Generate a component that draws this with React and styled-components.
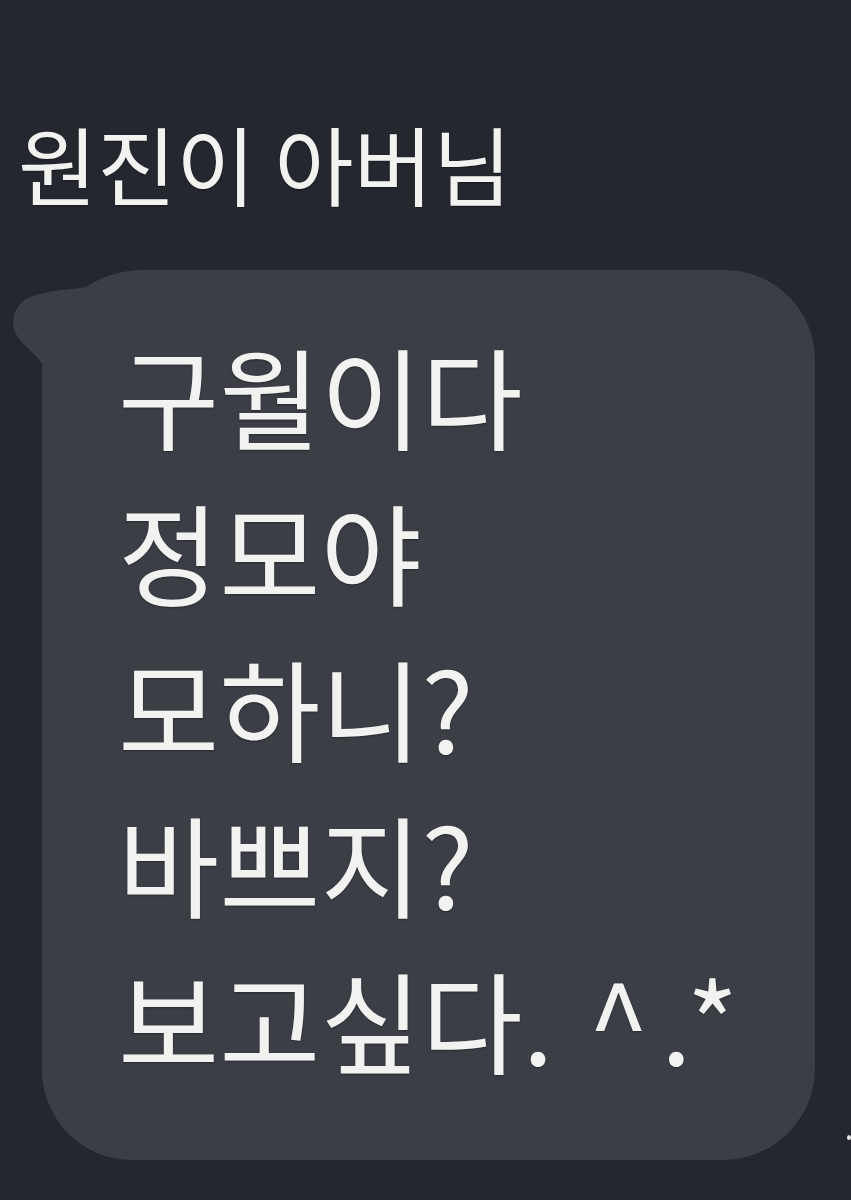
import React from "react";
import styled, { createGlobalStyle } from "styled-components";

const Global = createGlobalStyle`
  html, body { margin: 0; padding: 0; background: #24272e; }
  body { font-family: "Noto Sans CJK KR", "Noto Sans", sans-serif; }
`;

const Page = styled.div`
  position: relative;
  width: 851px;
  height: 1200px;
  overflow: hidden;
  background: #24272e;
  padding: 108px 36px 0 42px;
  box-sizing: border-box;
  display: flex;
  flex-direction: column;
  gap: 52px;
`;

const Name = styled.div`
  margin-left: -24px;
  color: #f2f2f0;
  font-size: 86px;
  line-height: 110px;
  font-weight: 400;
  text-shadow: 0 1px 2px rgba(0, 0, 0, 0.35);
`;

const Bubble = styled.div`
  position: relative;
  width: 773px;
  height: 890px;
  box-sizing: border-box;
  background: #3b3e45;
  border-radius: 100px 90px 92px 90px;
  padding: 46px 0 0 76px;
`;

const Tail = styled.svg`
  position: absolute;
  left: -42px;
  top: 0;
  width: 150px;
  height: 120px;
`;

const Line = styled.div`
  color: #f2f2f0;
  font-size: 110px;
  line-height: 156px;
  font-weight: 400;
  white-space: nowrap;
  text-shadow: 0 1px 2px rgba(0, 0, 0, 0.35);
`;

const Emoticon = styled.span`
  letter-spacing: 12px;
  margin-left: 10px;
`;

const Speck = styled.span`
  position: absolute;
  left: 847px;
  top: 1135px;
  width: 4px;
  height: 5px;
  border-radius: 50%;
  background: #e8e8e4;
`;

const lines = ["구월이다", "정모야", "모하니?", "바쁘지?"];

export default function App() {
  return (
    <>
      <Global />
      <Page>
        <Name>원진이 아버님</Name>
        <Bubble>
          <Tail viewBox="0 0 150 120">
            <path
              d="M 90 17 C 60 20, 40 22, 28 28 C 14 35, 10 52, 16 64 C 22 76, 35 82, 42 94 L 120 112 L 110 17 Z"
              fill="#3b3e45"
            />
          </Tail>
          {lines.map((l) => (
            <Line key={l}>{l}</Line>
          ))}
          <Line>
            보고싶다. <Emoticon>^.*</Emoticon>
          </Line>
        </Bubble>
        <Speck />
      </Page>
    </>
  );
}
